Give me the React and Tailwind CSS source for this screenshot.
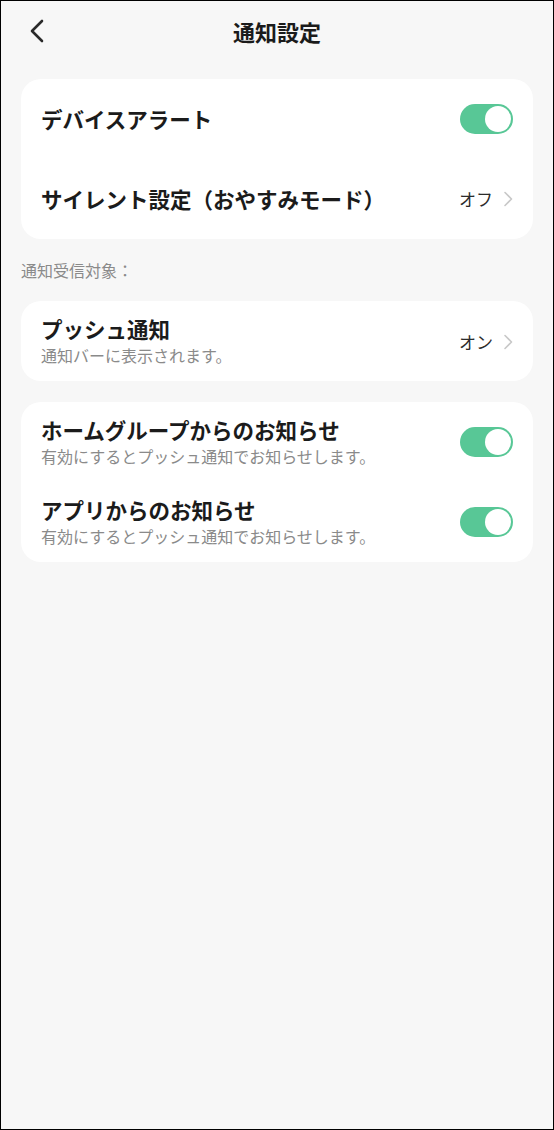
import React, { useState } from "react";

const font = { fontFamily: '"Noto Sans CJK JP", "Noto Sans", sans-serif' };

function Toggle({ on, setOn }) {
  return (
    <button
      onClick={() => setOn(!on)}
      className={`w-[53px] h-[30px] rounded-full p-[2px] flex items-center ${
        on ? "bg-[#58c796] justify-end" : "bg-[#d9d9d9] justify-start"
      }`}
    >
      <span className="w-[26px] h-[26px] rounded-full bg-white block"></span>
    </button>
  );
}

function Chevron() {
  return (
    <svg width="10" height="16" viewBox="0 0 10 16" fill="none">
      <path
        d="M2 1.5 L8.5 8 L2 14.5"
        stroke="#c8c8c8"
        strokeWidth="1.6"
        strokeLinecap="round"
        strokeLinejoin="round"
      />
    </svg>
  );
}

function App() {
  const [alert, setAlert] = useState(true);
  const [home, setHome] = useState(true);
  const [app, setApp] = useState(true);

  return (
    <div
      className="w-[554px] h-[1130px] box-border border border-black bg-[#f7f7f7] text-[#1b1b1b]"
      style={font}
    >
      {/* header */}
      <div className="h-[60px] grid grid-cols-[1fr_auto_1fr] items-center px-[28px]">
        <button className="w-[20px]">
          <svg width="16" height="24" viewBox="0 0 16 24" fill="none">
            <path
              d="M13 2 L3 12 L13 22"
              stroke="#2a2a2a"
              strokeWidth="2.6"
              strokeLinecap="round"
              strokeLinejoin="round"
            />
          </svg>
        </button>
        <h1 className="text-[22px] font-bold text-[#1b1b1b] leading-none">通知設定</h1>
        <div></div>
      </div>

      <div className="px-[20px] pt-[18px]">
        {/* card 1 */}
        <div className="bg-white rounded-[20px] px-[20px]">
          <div className="h-[80px] flex items-center justify-between">
            <span className="text-[21.5px] font-bold">デバイスアラート</span>
            <Toggle on={alert} setOn={setAlert} />
          </div>
          <div className="h-[80px] flex items-center justify-between">
            <span className="text-[21.5px] font-bold">サイレント設定（おやすみモード）</span>
            <span className="flex items-center gap-[10px] text-[17px] text-[#2b2b2b]">
              オフ
              <Chevron />
            </span>
          </div>
        </div>

        <p className="text-[16px] text-[#8a8a8a] mt-[20px] mb-[20px] leading-[22px]">
          通知受信対象：
        </p>

        {/* card 2 */}
        <div className="bg-white rounded-[20px] px-[20px] h-[80px] flex items-center justify-between">
          <div className="flex flex-col">
            <span className="text-[21.5px] font-bold leading-[29px]">プッシュ通知</span>
            <span className="text-[16px] text-[#8a8a8a] leading-[25px]">通知バーに表示されます。</span>
          </div>
          <span className="flex items-center gap-[10px] text-[17px] text-[#2b2b2b] mt-[2px]">
            オン
            <Chevron />
          </span>
        </div>

        {/* card 3 */}
        <div className="bg-white rounded-[20px] px-[20px] mt-[21px]">
          {[
            ["ホームグループからのお知らせ", home, setHome],
            ["アプリからのお知らせ", app, setApp],
          ].map(([title, on, setOn], i) => (
            <div key={i} className="h-[80px] flex items-center justify-between">
              <div className="flex flex-col">
                <span className="text-[21.5px] font-bold leading-[29px]">{title}</span>
                <span className="text-[16px] text-[#8a8a8a] leading-[25px]">
                  有効にするとプッシュ通知でお知らせします。
                </span>
              </div>
              <Toggle on={on} setOn={setOn} />
            </div>
          ))}
        </div>
      </div>
    </div>
  );
}

export default App;
